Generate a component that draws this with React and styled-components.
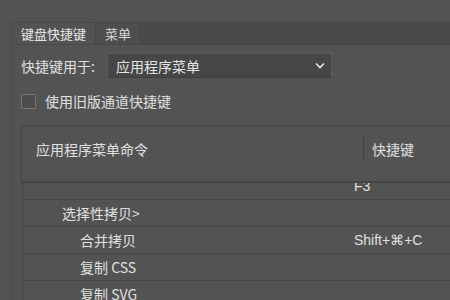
import React from "react";
import styled, { createGlobalStyle } from "styled-components";

const Global = createGlobalStyle`
  html, body {
    margin: 0;
    background: #535353;
    overflow: hidden;
  }
  body {
    font-family: "Noto Sans CJK SC", "Noto Sans", sans-serif;
    color: #e0e0e0;
  }
`;

const Page = styled.div`
  width: 450px;
  height: 300px;
  padding: 22px 0 0 11px;
  box-sizing: border-box;
  overflow: hidden;
`;

const Panel = styled.div`
  border-left: 1px solid #474747;
  height: 100%;
`;

const TabBar = styled.div`
  display: flex;
  height: 21px;
  background: #4a4a4a;
  border-top: 1px solid #474747;
  border-bottom: 1px solid #484848;
`;

const Tab = styled.div`
  width: ${p => p.w}px;
  display: flex;
  align-items: center;
  padding-left: 9px;
  box-sizing: border-box;
  font-size: 13px;
  background: ${p => (p.active ? "#535353" : "#4e4e4e")};
  color: ${p => (p.active ? "#e8e8e8" : "#d6d6d6")};
  border-right: 1px solid #464646;
`;

const Content = styled.div`
  padding: 8px 0 0 9px;
  display: flex;
  flex-direction: column;
`;

const FormRow = styled.div`
  display: flex;
  align-items: center;
  gap: 12px;
  font-size: 14px;
`;

const Select = styled.div`
  width: 225px;
  height: 25px;
  box-sizing: border-box;
  background: #464646;
  border: 1px solid #5c5c5c;
  border-bottom-color: #3e3e3e;
  display: flex;
  align-items: center;
  justify-content: space-between;
  padding: 0 6px 0 8px;
  font-size: 14px;
  color: #e4e4e4;
`;

const CheckRow = styled.label`
  display: flex;
  align-items: center;
  gap: 9px;
  margin-top: 13px;
  font-size: 14px;
`;

const Box = styled.span`
  width: 13px;
  height: 13px;
  border: 1px solid #767676;
  border-radius: 1px;
  background: #4d4d4d;
`;

const TableHead = styled.div`
  margin-top: 14px;
  width: 460px;
  height: 58px;
  flex-shrink: 0;
  box-sizing: border-box;
  padding-top: 10px;
  border-top: 1px solid #484848;
  border-left: 1px solid #464646;
  border-bottom: 2px solid #444444;
  display: flex;
  align-items: flex-start;
  font-size: 14px;
`;

const HeadCell = styled.div`
  width: ${p => p.w}px;
  padding-left: ${p => p.pad}px;
  box-sizing: border-box;
  height: 25px;
  display: flex;
  align-items: center;
  border-right: ${p => (p.divider ? "1px solid #444444" : "none")};
`;

const TableBody = styled.div`
  width: 460px;
  margin-left: 1px;
  height: 130px;
  overflow: hidden;
  border-left: 1px solid #464646;
`;

const List = styled.div`
  margin-top: -10px;
`;

const Row = styled.div`
  display: flex;
  height: 27px;
  box-sizing: border-box;
  border-bottom: 1px solid #474747;
  align-items: center;
  font-size: 14px;
`;

const Cmd = styled.div`
  width: 331px;
  padding-left: ${p => 21 + p.level * 18}px;
  box-sizing: border-box;
`;

const Key = styled.div`
  font-family: "Liberation Sans", "Noto Sans", sans-serif;
  font-size: 14px;
`;

const rows = [
  { level: 1, label: "", key: "F3" },
  { level: 1, label: "选择性拷贝>", key: "" },
  { level: 2, label: "合并拷贝", key: "Shift+⌘+C" },
  { level: 2, label: "复制 CSS", key: "" },
  { level: 2, label: "复制 SVG", key: "" },
];

export default function App() {
  return (
    <Page>
      <Global />
      <Panel>
        <TabBar>
          <Tab active w={84}>键盘快捷键</Tab>
          <Tab w={45}>菜单</Tab>
        </TabBar>
        <Content>
          <FormRow>
            快捷键用于:
            <Select>
              应用程序菜单
              <svg width="10" height="7" viewBox="0 0 10 7">
                <path d="M1 1.5 L5 5.5 L9 1.5" fill="none" stroke="#e4e4e4" strokeWidth="1.6" />
              </svg>
            </Select>
          </FormRow>
          <CheckRow>
            <Box />
            使用旧版通道快捷键
          </CheckRow>
          <TableHead>
            <HeadCell w={342} pad={14} divider>应用程序菜单命令</HeadCell>
            <HeadCell w={100} pad={8}>快捷键</HeadCell>
          </TableHead>
          <TableBody>
            <List>
              {rows.map((r, i) => (
                <Row key={i}>
                  <Cmd level={r.level}>{r.label}</Cmd>
                  <Key>{r.key}</Key>
                </Row>
              ))}
            </List>
          </TableBody>
        </Content>
      </Panel>
    </Page>
  );
}
